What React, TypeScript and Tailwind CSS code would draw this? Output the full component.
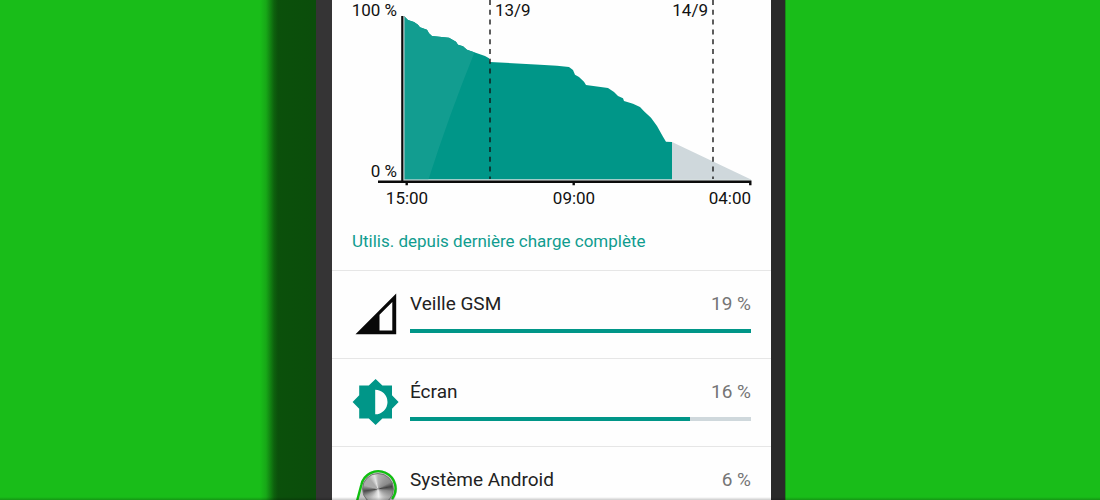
import type { ReactNode } from 'react';

const LEVEL =
  'M72 16 L76 20 L82 22 L86 24.7 L88 27.3 L95 29.7 L97 33.3 L100 36 L117 37.7 L124 41.7 L126 44.7 L131 46.3 L135 49.7 L153 56 L157 58.3 L158 62 L208 64.7 L225 65.7 L237 67 L241 70 L243 74.7 L247 77 L252 81.7 L254 85 L276 88 L282 92 L286 96 L291 98.3 L292 101 L301 103.7 L308 107 L312 111.3 L319 117.7 L325 126 L331 136.7 L334 141.7 L340 142 V179.5 H72 Z';

function BatteryChart() {
  return (
    <svg
      viewBox="0 0 439 216"
      className="block w-full font-[Roboto,sans-serif] text-[17px]"
      role="img"
      aria-label="Niveau de la batterie"
    >
      <defs>
        <clipPath id="level">
          <path d={LEVEL} />
        </clipPath>
      </defs>
      <path d="M340 142 L419 179.5 H340 Z" fill="#cfd8dc" />
      <path d={LEVEL} fill="#009688" />
      <path d="M60 0 H162 L143 51 Q116 118 96 181 H60 Z" fill="#129d90" clipPath="url(#level)" />
      <path d="M72 16 V180 H419" fill="none" stroke="#c3d0d0" strokeWidth="1" />
      <path d="M158 0 V179 M381 0 V179" stroke="#111" strokeOpacity="0.85" strokeWidth="1.6" strokeDasharray="5 4.8" />
      <path d="M70.3 16 V182" stroke="#0b0b0b" strokeWidth="2.2" />
      <path d="M46 181.8 H419.5 M74.7 182 V185.3 M241.7 182 V185.3 M418.3 182 V185.3" stroke="#0b0b0b" strokeWidth="2.4" />
      <g fill="#111">
        <text x="65" y="16" textAnchor="end">100 %</text>
        <text x="65" y="177" textAnchor="end">0 %</text>
        <text x="163" y="16">13/9</text>
        <text x="376" y="16" textAnchor="end">14/9</text>
        <text x="75" y="204" textAnchor="middle">15:00</text>
        <text x="242" y="204" textAnchor="middle">09:00</text>
        <text x="419" y="204" textAnchor="end">04:00</text>
      </g>
    </svg>
  );
}

function SignalIcon() {
  return (
    <svg viewBox="0 0 46 46" className="size-[46px]" aria-hidden="true">
      <path d="M3.5 43.2 L44.2 2.5 V43.2 Z M27.5 23.8 V39.4 H40.3 V11 Z" fill="#080808" fillRule="evenodd" />
    </svg>
  );
}

function BrightnessIcon() {
  return (
    <svg viewBox="-0.6 0 46 46" className="size-[46px] overflow-visible" aria-hidden="true">
      <path
        d="M39.4 29.8 L46 23 L39.4 16.2 V6.6 H29.8 L23 0 L16.2 6.6 H6.6 V16.2 L0 23 L6.6 29.8 V39.4 H16.2 L23 46 L29.8 39.4 H39.4 Z M22.6 35.3 V10.7 A12.3 12.3 0 0 1 22.6 35.3 Z"
        fill="#009688"
        fillRule="evenodd"
      />
    </svg>
  );
}

function KnobIcon() {
  return (
    <div className="relative size-[46px]">
      <svg viewBox="0 0 46 46" className="size-[46px] overflow-visible" aria-hidden="true">
        <circle cx="26.6" cy="21.8" r="18.6" fill="#777" opacity="0.35" />
        <path d="M4.5 36 L9.3 18 A17.3 17.3 0 1 1 40 32 L36 46 H3 Z" fill="#c9c9c9" />
        <path d="M4.5 36 L9.3 18 A17.3 17.3 0 1 1 40 32" fill="none" stroke="#10c010" strokeWidth="2.4" />
      </svg>
      <div className="absolute left-[10px] top-[6px] size-8 rounded-full border border-neutral-500 bg-[conic-gradient(#b4b4b4,#999_35deg,#8a8a8a_60deg,#444_80deg,#888_100deg,#bbb_140deg,#eee_175deg,#ccc_210deg,#999_240deg,#4a4a4a_262deg,#aaa_285deg,#aaa_320deg,#e4e4e4_345deg,#b4b4b4)]" />
    </div>
  );
}

type Usage = { name: string; percent: number; fill: number; icon: ReactNode };

const USAGES: Usage[] = [
  { name: 'Veille GSM', percent: 19, fill: 100, icon: <SignalIcon /> },
  { name: 'Écran', percent: 16, fill: 82, icon: <BrightnessIcon /> },
  { name: 'Système Android', percent: 6, fill: 31, icon: <KnobIcon /> },
];

function UsageRow({ name, percent, fill, icon }: Usage) {
  return (
    <li className="flex h-[88px] items-start gap-3 border-t border-[#e6e6e6] px-5 pt-5">
      <div className="shrink-0">{icon}</div>
      <div className="min-w-0 flex-1">
        <div className="flex justify-between text-[19px] leading-[26px]">
          <span className="text-[#222]">{name}</span>
          <span className="text-[#757575]">{percent} %</span>
        </div>
        <div
          className="mt-3 h-1 bg-[#cfd8dc]"
          role="progressbar"
          aria-label={name}
          aria-valuenow={percent}
        >
          <div className="h-full bg-[#009688]" style={{ width: `${fill}%` }} />
        </div>
      </div>
    </li>
  );
}

export default function App() {
  return (
    <div className="relative grid h-screen grid-cols-[minmax(0,316fr)_469px_minmax(0,315fr)] overflow-hidden bg-[#19bd19] font-[Roboto,sans-serif]">
      <div className="flex justify-end">
        <div className="w-14 bg-[linear-gradient(to_right,#19bd19,#17a817_6px,#0d620d_14px,#0b500b_18px,#0b4d0b)]" />
      </div>
      <main className="border-l-16 border-r-14 border-l-[#353435] border-r-[#2a2a2a] bg-[#fefefe]">
        <BatteryChart />
        <h1 className="flex h-[54px] items-center px-5 pb-[2px] text-[17px] text-[#109c8f]">
          Utilis. depuis dernière charge complète
        </h1>
        <ul>
          {USAGES.map((usage) => (
            <UsageRow key={usage.name} {...usage} />
          ))}
        </ul>
      </main>
      <div className="border-l border-[#178c17]" />
      <div className="absolute inset-x-0 bottom-0 h-[3px] bg-linear-to-b from-transparent to-black/20" />
    </div>
  );
}
